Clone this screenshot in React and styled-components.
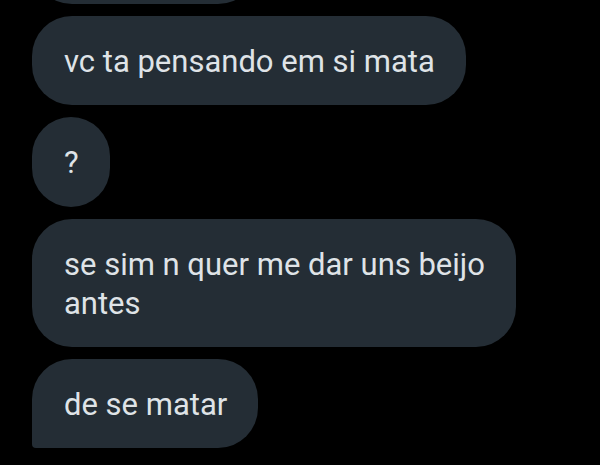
import React from "react";
import styled, { createGlobalStyle } from "styled-components";

const GlobalStyle = createGlobalStyle`
  html, body {
    margin: 0;
    padding: 0;
    background: #000000;
    overflow: hidden;
  }
  body {
    font-family: Roboto, "Noto Sans", "Liberation Sans", sans-serif;
  }
`;

const Screen = styled.div`
  width: 600px;
  height: 465px;
  background: #000000;
  overflow: hidden;
`;

const Thread = styled.div`
  display: flex;
  flex-direction: column;
  align-items: flex-start;
  gap: 12px;
  padding: 0 32px;
`;

const Bubble = styled.div`
  box-sizing: border-box;
  min-height: 89px;
  padding: 26px 31px 24px 32px;
  background: #242d35;
  color: #dfe3e7;
  font-size: 31px;
  line-height: 39.3px;
  white-space: pre-line;
  border-radius: ${(p) => (p.$tail ? "40px 40px 40px 4px" : "40px")};
`;

const GhostBubble = styled(Bubble)`
  width: ${(p) => p.$w}px;
  margin-top: -85px;
`;

const messages = [
  { text: "vc ta pensando em si mata" },
  { text: "?" },
  { text: "se sim n quer me dar uns beijo\nantes" },
  { text: "de se matar", tail: true },
];

export default function App() {
  return (
    <>
      <GlobalStyle />
      <Screen>
        <Thread>
          <GhostBubble $w={226} aria-hidden="true" />
          {messages.map((m, i) => (
            <Bubble key={i} $tail={m.tail}>
              {m.text}
            </Bubble>
          ))}
        </Thread>
      </Screen>
    </>
  );
}
